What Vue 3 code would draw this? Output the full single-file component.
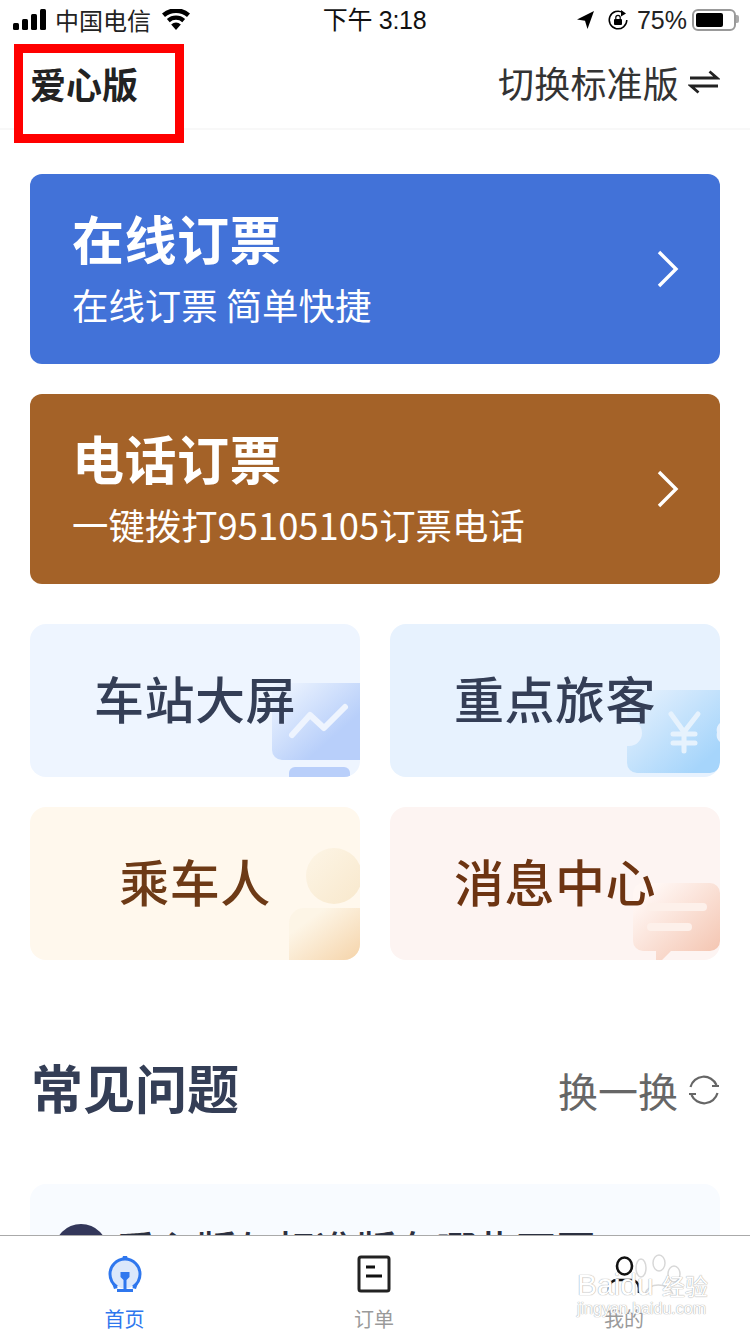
<script setup>
const tiles = [
  { t: '车站大屏', c: 'blue', k: 'screen' },
  { t: '重点旅客', c: 'sky', k: 'ticket' },
  { t: '乘车人', c: 'cream', k: 'person' },
  { t: '消息中心', c: 'rose', k: 'msg' }
]
</script>

<template>
  <div class="page">
    <div class="status">
      <div class="st-left">
        <svg width="34" height="22" viewBox="0 0 34 22"><rect x="0" y="14" width="6" height="7" rx="1.5"/><rect x="9" y="10" width="6" height="11" rx="1.5"/><rect x="18" y="5" width="6" height="16" rx="1.5"/><rect x="27" y="0" width="6" height="21" rx="1.5"/></svg>
        <span class="carrier">中国电信</span>
        <svg class="wifi" width="30" height="22" viewBox="0 0 30 22"><path d="M15 21l-4.800-5.500a7 7 0 0 1 9.600 0z"/><path d="M8.700 13.200l-2.800-3.200a13.800 13.800 0 0 1 18.200 0l-2.800 3.200a9.500 9.500 0 0 0-12.600 0z"/><path d="M4 8.100L1 4.600a21 21 0 0 1 28 0l-3 3.500a16.500 16.500 0 0 0-22 0z"/></svg>
      </div>
      <span class="time">下午 3:18</span>
      <div class="st-right">
        <svg width="18" height="20" viewBox="0 0 18 20"><path d="M17 1L0 9.500l8 1.200L10.500 19z"/></svg>
        <svg class="lock" width="22" height="22" viewBox="0 0 22 22"><path d="M16 3.800A8.800 8.800 0 1 0 19.800 11" fill="none" stroke="#000" stroke-width="1.500"/><path d="M14 1l5 3.500-5 3z"/><rect x="7" y="10" width="8" height="6" rx="1"/><path d="M8.800 10V8.500a2.200 2.200 0 0 1 4.400 0V10" fill="none" stroke="#000" stroke-width="1.200"/></svg>
        <span class="pct">75%</span>
        <div class="battery"><div class="level"></div></div>
      </div>
    </div>

    <header class="nav">
      <div class="mark"><span class="nav-title">爱心版</span></div>
      <div class="switch">
        <span>切换标准版</span>
        <svg width="32" height="26" viewBox="0 0 32 26" fill="none" stroke="#222" stroke-width="2.800"><path d="M2 9h27L21.500 2.500"/><path d="M30 17H3l7.500 6.500"/></svg>
      </div>
    </header>

    <main class="content">
      <section class="banner banner-blue">
        <div>
          <h2>在线订票</h2>
          <p>在线订票 简单快捷</p>
        </div>
        <svg class="chev" width="24" height="38" viewBox="0 0 24 38" fill="none" stroke="#fff" stroke-width="3.400"><path d="M3 2l17 17L3 36"/></svg>
      </section>
      <section class="banner banner-brown">
        <div>
          <h2>电话订票</h2>
          <p>一键拨打95105105订票电话</p>
        </div>
        <svg class="chev" width="24" height="38" viewBox="0 0 24 38" fill="none" stroke="#fff" stroke-width="3.400"><path d="M3 2l17 17L3 36"/></svg>
      </section>

      <div class="grid">
        <div v-for="x in tiles" :key="x.t" class="tile" :class="x.c">
          <svg v-if="x.k === 'screen'" class="art" width="88" height="94" viewBox="0 0 88 94">
            <defs><linearGradient id="g1" x1="0" y1="0" x2="1" y2="1"><stop offset="0.1" stop-color="#eaf2fe"/><stop offset="0.7" stop-color="#b8cffa"/></linearGradient></defs>
            <path d="M10 0h78v77H10a10 10 0 0 1-10-10V10A10 10 0 0 1 10 0z" fill="url(#g1)"/>
            <path d="M20 52l18-20 14 13 21-21" fill="none" stroke="#eef4fe" stroke-width="6" stroke-linecap="round" stroke-linejoin="round"/>
            <path d="M17 94V90a6 6 0 0 1 6-6h49a6 6 0 0 1 6 6v4z" fill="#b9cffa"/>
          </svg>
          <svg v-else-if="x.k === 'ticket'" class="art art-ticket" width="93" height="83" viewBox="0 0 93 83">
            <defs><linearGradient id="g2" x1="0" y1="0" x2="1" y2="1"><stop offset="0.05" stop-color="#e6f1fd"/><stop offset="0.85" stop-color="#a6d5fb"/></linearGradient></defs>
            <path d="M13 0h80v33a9.500 9.500 0 0 0-3 9.500 9.500 9.500 0 0 0 3 9.500v21a10 10 0 0 1-10 10H10A10 10 0 0 1 0 73V56h2a13 13 0 0 0 13-13 13 13 0 0 0-13-13H0V13A13 13 0 0 1 13 0z" fill="url(#g2)"/>
            <path d="M44 24l13 18 14-18M57 42v19M46 44h22M46 53h22" fill="none" stroke="#e6f2fd" stroke-width="5" stroke-linecap="round"/>
          </svg>
          <svg v-else-if="x.k === 'person'" class="art" width="71" height="112" viewBox="0 0 71 112">
            <defs>
              <linearGradient id="g3" x1="0" y1="0" x2="1" y2="1"><stop offset="0" stop-color="#fdf5e6"/><stop offset="1" stop-color="#f8e8cc"/></linearGradient>
              <linearGradient id="g4" x1="0" y1="0" x2="1" y2="1"><stop offset="0.25" stop-color="#fdf5e6"/><stop offset="1" stop-color="#f5d4aa"/></linearGradient>
            </defs>
            <circle cx="45" cy="28" r="28" fill="url(#g3)"/>
            <path d="M0 112V75a15 15 0 0 1 15-15h56v40a12 12 0 0 1-12 12z" fill="url(#g4)"/>
          </svg>
          <svg v-else class="art" width="87" height="77" viewBox="0 0 87 77">
            <defs><linearGradient id="g5" x1="0" y1="0" x2="1" y2="1"><stop offset="0.15" stop-color="#fff6f3"/><stop offset="0.95" stop-color="#f4c5b1"/></linearGradient></defs>
            <path d="M10 0h67a10 10 0 0 1 10 10v48a10 10 0 0 1-10 10H38l-9 9H23V68H10A10 10 0 0 1 0 58V10A10 10 0 0 1 10 0z" fill="url(#g5)"/>
            <rect x="14" y="20" width="60" height="8" rx="4" fill="#fdf0ea"/>
            <rect x="14" y="40" width="45" height="8" rx="4" fill="#fdf0ea"/>
          </svg>
          <span class="tile-text">{{ x.t }}</span>
        </div>
      </div>

      <div class="faq-head">
        <h3>常见问题</h3>
        <div class="refresh">
          <span>换一换</span>
          <svg width="32" height="32" viewBox="0 0 32 32" fill="none" stroke="#666" stroke-width="2.200"><path d="M2.500 13A13.800 13.800 0 0 1 28.500 11"/><path d="M29.500 19A13.800 13.800 0 0 1 3.500 21"/><path d="M24 12h7M1 20h7"/></svg>
        </div>
      </div>

      <div class="faq-card">
        <span class="q">问</span>
        <span class="q-text">爱心版与标准版有哪些不同</span>
      </div>
    </main>

    <nav class="tabbar">
      <div class="tab active">
        <svg width="36" height="38" viewBox="0 0 36 38">
          <ellipse cx="18" cy="19" rx="13.500" ry="14.500" fill="#dce8fb"/>
          <path d="M10 32C5 28.500 3 24 3 19 3 11 9.500 4 18 4s15 7 15 15c0 5-2 9.500-7 13" fill="none" stroke="#2f77ee" stroke-width="3"/>
          <path d="M15 4l1-3h4l1 3zM5 28l6 5-4 1zM31 28l-6 5 4 1z" fill="#2f77ee"/>
          <path d="M13.500 17h9v5l-3 3v9h6.500v3H10v-3h6.500v-9l-3-3z" fill="#2f77ee"/>
        </svg>
        <span>首页</span>
      </div>
      <div class="tab">
        <svg width="36" height="38" viewBox="0 0 36 38" fill="none"><rect x="3" y="2" width="30" height="34" rx="2" stroke="#222" stroke-width="3"/><path d="M10 12h9M10 21h16" stroke="#111" stroke-width="3"/></svg>
        <span>订单</span>
      </div>
      <div class="tab">
        <svg width="36" height="38" viewBox="0 0 36 38" fill="none" stroke="#111" stroke-width="2.600"><ellipse cx="18.500" cy="11" rx="7.500" ry="8.500"/><path d="M3 38v-5c0-5 4-8 8-8h14c4 0 8 3 8 8v5"/></svg>
        <span>我的</span>
      </div>
    </nav>

    <div class="watermark">
      <svg class="paw" width="56" height="50" viewBox="0 0 56 50" fill="none" stroke="#d8d8d8" stroke-width="1.500"><ellipse cx="12" cy="14" rx="5" ry="9"/><ellipse cx="30" cy="9" rx="6" ry="8"/><ellipse cx="45" cy="20" rx="6" ry="8"/><path d="M16 40c4-12 22-12 28 0"/></svg>
      <span class="wm-main">Baidu <i>经验</i></span>
      <span class="wm-sub">jingyan.baidu.com</span>
    </div>
  </div>
</template>

<style>
html, body { margin: 0; background: #fff; }
</style>

<style scoped>
.page {
  width: 750px; height: 1334px; position: relative; overflow: hidden; background: #fff;
  font-family: "Noto Sans CJK SC", "Liberation Sans", sans-serif; color: #222;
}
.status { height: 44px; display: flex; align-items: center; justify-content: space-between; padding: 0 14px 4px 13px; box-sizing: border-box; position: relative; color: #111; }
.st-left, .st-right { display: flex; align-items: center; }
.st-left { width: 240px; }
.st-right { width: 240px; justify-content: flex-end; }
.carrier { font-size: 24px; margin-left: 8px; line-height: 30px; color: #222; }
.wifi { margin-left: 10px; }
.time { font-size: 25px; line-height: 30px; color: #111; letter-spacing: -0.300px; font-family: "Liberation Sans", "Noto Sans CJK SC", sans-serif; }
.lock { margin-left: 12px; }
.pct { font-size: 25px; margin-left: 8px; font-family: "Liberation Sans", sans-serif; color: #222; }
.battery { width: 44px; height: 22px; border: 2px solid #999; border-radius: 6px; margin-left: 5px; padding: 2px; box-sizing: border-box; position: relative; }
.battery::after { content: ""; position: absolute; right: -5px; top: 4px; width: 3px; height: 8px; background: #aaa; border-radius: 0 2px 2px 0; }
.level { width: 27px; height: 14px; background: #000; border-radius: 2px; }
.nav { height: 86px; box-sizing: border-box; display: flex; justify-content: space-between; border-bottom: 2px solid #f8f8f8; padding-right: 30px; }
.mark { width: 170px; height: 99px; box-sizing: border-box; margin-left: 14px; border: 9px solid #f00; position: relative; z-index: 2; background: #fff; }
.nav-title { display: block; font-size: 36px; line-height: 46px; margin: 7px 0 0 7px; font-weight: 700; color: #222; }
.switch { display: flex; align-items: center; gap: 9px; font-size: 36px; height: 76px; color: #333; letter-spacing: 0.200px; }
.content { padding: 44px 30px 0; }
.banner { height: 190px; border-radius: 12px; box-sizing: border-box; display: flex; align-items: center; justify-content: space-between; padding: 0 40px 0 42px; color: #fff; margin-bottom: 30px; }
.banner-blue { background: #4272d8; }
.banner-brown { background: #a46228; }
.banner h2 { margin: -6px 0 0; font-size: 52px; line-height: 64px; font-weight: 700; letter-spacing: 0.500px; }
.banner p { margin: 12px 0 0; font-size: 36.400px; line-height: 44px; font-weight: 400; }
.grid { display: grid; grid-template-columns: 330px 330px; gap: 30px; margin-top: 40px; }
.tile { height: 153px; border-radius: 16px; box-sizing: border-box; padding-bottom: 8px; position: relative; overflow: hidden; display: flex; align-items: center; justify-content: center; font-size: 50px; font-weight: 500; }
.tile-text { position: relative; letter-spacing: 0.500px; }
.art { position: absolute; right: 0; bottom: 0; }
.art-ticket { bottom: 4px; }
.blue { background: #eef5ff; color: #343e56; }
.sky { background: #e7f2fe; color: #343e56; }
.cream { background: #fff8ed; color: #6d3a16; }
.rose { background: #fdf4f2; color: #6d3412; }
.faq-head { display: flex; align-items: center; justify-content: space-between; margin-top: 95px; }
.faq-head h3 { margin: 0 0 0 1px; font-size: 52px; line-height: 64px; font-weight: 700; color: #343e56; }
.refresh { display: flex; align-items: center; gap: 10px; font-size: 40px; color: #666; position: relative; top: 3px; }
.faq-card { height: 200px; margin-top: 65px; background: #f8fbff; border-radius: 16px; padding: 40px 24px; box-sizing: border-box; display: flex; gap: 8px; align-items: flex-start; }
.q { width: 54px; height: 54px; border-radius: 50%; background: #33375a; color: #fff; font-size: 30px; line-height: 54px; text-align: center; flex: none; }
.q-text { font-size: 40px; line-height: 48px; font-weight: 500; color: #2b3040; }
.tabbar { position: absolute; left: 0; right: 0; bottom: 0; height: 99px; box-sizing: border-box; border-top: 1px solid #aaa; background: #fff; display: flex; padding: 19px 0 0 0; }
.tab { width: 250px; display: flex; flex-direction: column; align-items: center; font-size: 20px; color: #9a9a9a; gap: 11px; line-height: 30px; }
.tab:nth-child(1) { width: 249px; }
.tab.active { color: #2f77ee; }
.watermark { position: absolute; left: 577px; top: 1270px; width: 170px; color: #fff; text-shadow: 0 0 1px #aaa, 0 0 1px #aaa; line-height: 1; }
.paw { position: absolute; left: 52px; top: -16px; }
.wm-main { display: block; position: relative; font-size: 30px; font-family: "Liberation Sans", "Noto Sans CJK SC", sans-serif; }
.wm-main i { font-style: normal; font-size: 23px; font-family: "Noto Sans CJK SC", sans-serif; }
.wm-sub { display: block; position: relative; font-size: 16px; margin-top: 1px; font-family: "Liberation Sans", sans-serif; }
</style>
